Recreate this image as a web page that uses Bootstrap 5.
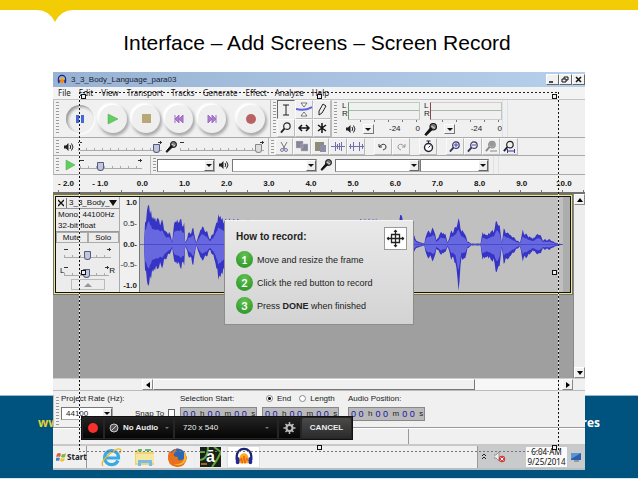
<!DOCTYPE html>
<html lang="en">
<head>
<meta charset="utf-8">
<meta name="viewport" content="width=device-width, initial-scale=1">
<title>Interface – Add Screens – Screen Record</title>
<link rel="stylesheet" href="https://cdn.jsdelivr.net/npm/bootstrap@5.3.0/dist/css/bootstrap.min.css">
<style>
body{font-family:"Liberation Sans",Arial,sans-serif;font-size:8px;line-height:10px;color:#222;background:#fff}
button,input,select{font:inherit;color:inherit;margin:0;padding:0;border:0;background:none;border-radius:0}
svg{display:block;flex:none}
h1{font-size:21px;line-height:26px;color:#000}
.slide-top{height:10px;background:#f2cc05}
.notch{margin-left:37px;width:36px;height:12px}
.slide-head{height:72px}
.layer{grid-area:1/1}
.band{height:84px;background:#00527f;border-top:1px solid #8fbdd2;border-bottom:1px solid #d9e8ee;font:bold 12px/16px "Open Sans",sans-serif;padding:19px 38px 0}
.site{color:#e2d335}
.app-win{margin:0 53px 9px;background:#f0f0f0}
.title-row{height:15px;background:linear-gradient(90deg,#98b2d3,#b6cfec);color:#182234}
.win-btn{width:13px;height:11px;background:#f1f1f1;border:1px solid #fff;border-right-color:#666;border-bottom-color:#666}
.menu-row{height:13px;padding-left:5px;gap:8px;background:#f3f3f4;border-bottom:1px solid #c4c4c4;font-family:"Noto Sans",sans-serif}
.menu-row button{color:#222}
.tool-row{border-bottom:1px solid #aaa}
.row-a{height:38px}.row-b{height:18px}.row-c{height:19px}
.grip{width:7px;align-self:stretch;flex:none;border-left:1px solid #bbb;background:repeating-linear-gradient(#999 0 1px,#f4f4f4 1px 3px) 2px 2px/3px calc(100% - 4px) no-repeat}
.deck{gap:5px;padding:0 5px 0 6px}
.deck .rec{margin-left:6px}
.round-btn{width:28px;height:28px;border-radius:50%;background:#efefef;box-shadow:-2px -2px 2px #fff,1px 2px 3px 1px #aaa;display:grid;place-items:center}
.round-btn.pressed{box-shadow:inset 2px 2px 3px #999,1px 1px 2px #fff}
.tools{display:grid;grid-template-columns:repeat(3,18px);grid-template-rows:19px 18px}
.cell{display:grid;place-items:center;border:1px solid #fafafa;border-right-color:#bbb;border-bottom-color:#bbb}
.cell.pressed{border-color:#666 #eee #eee #666}
.edit-set .cell{width:18px}
.edit-set .gap-after{margin-right:9px}
.meter{width:78px}
.bars{height:18px;margin-top:2px}
.bar-box{border:1px solid #b9cdb9;border-left:1px solid #6ba06b;border-bottom-color:#ccc}
.mic-meter .bar-box{border-color:#d8c8c8 #b9c9b9 #ccc #8c4646}
.bar-box div{height:8px;border-bottom:1px solid #a9b9a9}
.bar-scale{height:18px;background:repeating-linear-gradient(90deg,#777 0 1px,transparent 1px 14px) 18px 0/60px 2px no-repeat}
.range{appearance:none;height:14px;background:linear-gradient(#aaa,#aaa) 0 10px/100% 1px no-repeat,repeating-linear-gradient(90deg,#aaa 0 1px,transparent 1px 8px) 0 8px/100% 2px no-repeat,linear-gradient(#333,#333) 0 2px/4px 1px no-repeat,linear-gradient(#333,#333) 100% 2px/4px 1px no-repeat,linear-gradient(#333,#333) calc(100% - 1px) 1px/1px 3px no-repeat}
.range::-webkit-slider-thumb{appearance:none;width:7px;height:9px;margin-top:3px;background:#c3c6dc;border:1px solid #555b7c;border-radius:1px 1px 4px 4px}
.range.off::-webkit-slider-thumb{background:#ddd;border-color:#888}
.w-vol{width:84px}.w-speed{width:62px}.w-pan{width:20px}
.w-host{width:58px}.w-dev{width:85px}.w-chan{width:69px}.w-rate{width:52px}
.combo{height:13px;background:#fff;border:1px solid #777;border-right-color:#aaa;border-bottom-color:#aaa}
.combo select{appearance:none;min-width:0;flex:1;height:11px;line-height:11px;padding-left:4px}
.arrow{width:10px;align-self:stretch;background:#eee;border:1px solid #fff;border-right-color:#666;border-bottom-color:#666;display:grid;place-items:center;flex:none}
.arrow::after,.drop::after{content:"";border:3px solid transparent;border-top:3px solid #111;border-bottom:0}
.drop{width:11px;height:10px;display:grid;place-items:center;border:1px solid #fff;border-right-color:#777;border-bottom-color:#777}
.icon-pad{margin:0 3px}
.ruler{height:19px;font-weight:bold;color:#111;border-bottom:2px solid #70716d;background:repeating-linear-gradient(90deg,#777 0 1px,transparent 1px 21px) 5px 15px/100% 2px no-repeat}
.ruler span{flex:42 1 0;text-align:center;padding-top:4px}
.ruler span:first-child{flex-grow:26}
.work{height:184px;background:#9f9f9f}
.track{height:101px;border:2px solid #eee39b;outline:1px solid #77775f;outline-offset:-1px}
.track-in{border:1px solid #111}
.panel-box{width:63px;background:#ececec;color:#111;flex:none;line-height:11px}
.panel-box .hr{border-bottom:1px solid #999}
.panel-box .line{padding-left:2px}
.close-x{padding:0 2px;border-right:1px solid #777}
.mute{border:1px solid #aaa;height:11px;line-height:9px;width:50%}
.fold{width:34px;height:11px;border:1px solid #bbb;display:grid;place-items:center}
.vscale{width:21px;background:#f0f0f0;border-left:1px solid #aaa;border-right:1px solid #777;font-weight:bold;padding:1px 2px 1px 0;text-align:right;flex:none}
.vbar{width:12px;background:#ececec;border-left:1px solid #888}
.vbar button,.hbar button{width:11px;height:11px;background:#f2f2f2;border:1px solid #fff;border-right-color:#888;border-bottom-color:#888;display:grid;place-items:center}
.hbar{height:12px;border-top:1px solid #ccc;padding:0 12px 0 89px}
.thumb{flex:287;background:#f0f0f0;border:1px solid #fff;border-right-color:#777;border-bottom-color:#777}
.trough{flex:78;background:#f7f7f7}
.sel-row{height:38px;border-top:1px solid #bbb;padding:4px 0 0;border-bottom:1px solid #999}
.c-rate{width:75px;padding-left:1px}.c-snap{width:45px;padding-top:14px}.c-start{width:82px}.c-end{width:86px}
.time{width:77px;height:14px;background:#b9b9b9;border:1px solid #888;color:#222;font-size:8px;padding-left:2px;gap:3px}
.time input{width:14px;color:#1515a8;font-size:9px;height:12px}
.radio{appearance:none;width:7px;height:7px;border-radius:50%;border:1px solid #888;background:#fff}
.radio:checked{background:radial-gradient(#111 0 1px,#fff 2px)}
.tick{appearance:none;width:7px;height:8px;border:1px solid #666;background:#fff}
.status{height:16px;border-top:1px solid #fff}
.status div:first-child{flex:356;border-right:1px solid #999}.status div:last-child{flex:176}
.taskbar{height:26px;border-top:2px solid #c8c8c8;border-bottom:2px solid #b9bec2}
.start{width:34px;font:bold 8px/10px "Noto Sans",sans-serif;border-right:1px solid #999;gap:1px;padding-left:3px}
.task{height:22px;display:grid;place-items:center;width:33px}
.tray{background:#c8cacc;border-left:1px solid #999;font:8px/10px "Noto Sans",sans-serif}
.clock{background:#fafafa;color:#111;width:41px;text-align:center}
.stage-frame{position:absolute;left:79px;right:79px;top:20px;height:360px;pointer-events:none;background:repeating-linear-gradient(90deg,#222 0 2px,transparent 2px 4px) 0 0/100% 1px no-repeat,repeating-linear-gradient(90deg,#777 0 2px,transparent 2px 4px) 0 100%/100% 1px no-repeat,repeating-linear-gradient(#111 0 2px,#eee 2px 4px) 0 0/1px 100% no-repeat,repeating-linear-gradient(#111 0 2px,#eee 2px 4px) 100% 0/1px 100% no-repeat}
.handles{height:100%;padding:2px;display:grid;grid-template-columns:5px 5px 5px;align-content:space-between;justify-content:space-between}
.handles i{width:5px;height:5px;border:1px solid #111;background:#eee}
.howto{position:absolute;left:50%;margin-left:-95px;top:148px;width:190px;height:105px;background:linear-gradient(#e9e9e9,#d3d3d3);border:1px solid #8c8c8c;border-top-color:#f5f5f5;padding:6px 6px 0 11px;font-size:9px;color:#222}
.howto h2{font-size:10px;line-height:14px;font-weight:bold;padding-top:3px}
.howto .steps{margin-top:-2px}
.howto li{height:23px;gap:4px}
.num{width:17px;height:17px;border-radius:50%;background:radial-gradient(circle at 50% 25%,#5fc04f,#279023);color:#fff;font:bold 11px/17px Lato,sans-serif;text-align:center}
.move-box{width:23px;height:23px;background:#fff;border:1px solid #999;display:grid;place-items:center}
.recorder{position:absolute;left:81px;top:344px;width:272px;height:24px;background:#252525;border:1px solid #111;padding:1px;gap:2px;color:#eee;font-size:8px}
.recorder>*{height:20px;background:linear-gradient(#222,#050505)}
.recorder select{appearance:none;flex:1;min-width:0;height:18px}
.r-audio{width:68px}.r-size{width:102px}
.tri{border:2px solid transparent;border-top-color:#777;border-bottom:0}
.time .tri{border-width:3px 3px 0;border-top-color:#111}
.recorder .cancel{background:linear-gradient(#4a4a4a,#2b2b2b);flex:1;font-weight:bold;border-radius:2px;color:#eee}
</style>
<script src="https://cdn.jsdelivr.net/npm/bootstrap@5.3.0/dist/js/bootstrap.bundle.min.js"></script>
</head>
<body>
<svg width="0" height="0" class="position-absolute" aria-hidden="true">
<symbol id="spk" viewBox="0 0 10 10"><path d="M0 3.500h2L4.500 1v8L2 6.500H0z" fill="#222"/><path d="M6 3q1.500 2 0 4M7.500 1.500q3 3.500 0 7" fill="none" stroke="#222"/></symbol>
<symbol id="mic" viewBox="0 0 12 12"><circle cx="8.500" cy="3.500" r="3" fill="#777" stroke="#111"/><path d="M6 4.500 1 10.500l1 .8L7.500 6z" fill="#111" stroke="#111"/><path d="m7 3 3 2" stroke="#ddd"/></symbol>
<symbol id="lens" viewBox="0 0 13 13"><circle cx="7.500" cy="4.500" r="3.500" fill="none" stroke="currentColor" stroke-width="1.300"/><path d="M5 7 1 11.500" stroke="currentColor" stroke-width="2"/></symbol>
<symbol id="phones" viewBox="0 0 22 22"><path d="M3 14V10a8 8 0 0 1 16 0v4" fill="none" stroke="#1b2376" stroke-width="2.500"/><path d="M6 12q1-5 5-5t5 5v6H6z" fill="#ffab20"/><path d="M5 15h2l1-3 1 6 2-8 1 8 2-6 1 3h2" fill="none" stroke="#e85b12"/><rect x="2" y="11" width="4" height="8" rx="2" fill="#202b92"/><rect x="16" y="11" width="4" height="8" rx="2" fill="#202b92"/></symbol>
</svg>

<div class="d-flex flex-column min-vh-100">
<header class="slide-head">
  <div class="slide-top"></div>
  <svg class="notch" viewBox="0 0 36 12"><path d="M0 0q12 0 18 12Q24 0 36 0z" fill="#f2cc05"/></svg>
  <h1 class="text-center mb-0 mt-1 pt-1 pe-1">Interface – Add Screens – Screen Record</h1>
</header>
<main class="d-grid position-relative flex-grow-1">
<footer class="band layer align-self-end d-flex justify-content-between"><span class="site">www</span><span class="text-white">res</span></footer>
<section class="app-win layer position-relative align-self-start">
  <div class="title-row d-flex align-items-center">
    <svg class="ms-1 me-1" width="10" height="11"><use href="#phones"/></svg><span class="flex-grow-1">3_3_Body_Language_para03</span>
    <button class="win-btn" aria-label="Minimize"><svg width="10" height="9"><path d="M2 7h4" stroke="#111" stroke-width="1.500"/></svg></button>
    <button class="win-btn" aria-label="Restore"><svg width="10" height="9"><path d="M4 4V2h4v3H6M2 4h4v3H2z" fill="none" stroke="#111"/></svg></button>
    <button class="win-btn" aria-label="Close"><svg width="10" height="9"><path d="m3 2 5 5M8 2 3 7" stroke="#111" stroke-width="1.500"/></svg></button>
  </div>
  <nav class="menu-row d-flex align-items-center"><button>File</button><button>Edit</button><button>View</button><button>Transport</button><button>Tracks</button><button>Generate</button><button>Effect</button><button>Analyze</button><button>Help</button></nav>

  <div class="tool-row row-a d-flex">
    <span class="grip"></span>
    <div class="deck d-flex align-items-center">
      <button class="round-btn pressed" aria-label="Pause"><svg width="10" height="10"><path d="M1 1h3v8H1zM6 1h3v8H6z" fill="#4467d8"/></svg></button>
      <button class="round-btn" aria-label="Play"><svg width="12" height="12"><path d="m1 1 10 5L1 11z" fill="#61ce61" stroke="#4aa44a" stroke-width=".5"/></svg></button>
      <button class="round-btn" aria-label="Stop"><svg width="9" height="9"><path d="M0 0h9v9H0z" fill="#b9a877"/></svg></button>
      <button class="round-btn" aria-label="Skip to start"><svg width="10" height="10"><path d="M1 1v8M5 1v8L1 5zM9 1v8L5 5z" fill="#a87cd0" stroke="#a06cc4"/></svg></button>
      <button class="round-btn" aria-label="Skip to end"><svg width="10" height="10"><path d="M9 1v8M1 1v8l4-4zM5 1v8l4-4z" fill="#a87cd0" stroke="#a06cc4"/></svg></button>
      <button class="round-btn rec" aria-label="Record"><svg width="10" height="10"><circle cx="5" cy="5" r="5" fill="#b96262"/></svg></button>
    </div>
    <span class="grip"></span>
    <div class="tools">
      <button class="cell pressed" aria-label="Selection"><svg width="8" height="12"><path d="M1 1h6M4 1v10M1 11h6" stroke="#222"/></svg></button>
      <button class="cell" aria-label="Envelope"><svg width="16" height="15"><path d="M5 1h6L8 5zM5 14h6L8 10z" fill="#fff" stroke="#555" stroke-width=".8"/><path d="M0 7q9 2 16-2" fill="none" stroke="#5b63dd" stroke-width="2"/></svg></button>
      <button class="cell" aria-label="Draw"><svg width="10" height="13"><path d="m2 8 4-7 3 2-4 7-3 2z" fill="#eee" stroke="#222"/></svg></button>
      <button class="cell" aria-label="Zoom"><svg class="text-dark" width="12" height="12"><use href="#lens"/></svg></button>
      <button class="cell" aria-label="Time shift"><svg width="12" height="8"><path d="M1 4h10M4 1 1 4l3 3M8 1l3 3-3 3" fill="none" stroke="#111" stroke-width="1.500"/></svg></button>
      <button class="cell" aria-label="Multi tool"><svg width="10" height="10"><path d="M5 0v10M1 2l8 6M9 2 1 8" stroke="#111" stroke-width="1.500"/></svg></button>
    </div>
    <span class="grip"></span>
    <div class="meter ms-1"><div class="bars d-flex"><div class="lh-1">L<br>R</div><div class="bar-box flex-grow-1"><div></div></div></div>
      <div class="bar-scale d-flex align-items-center justify-content-between ps-1"><svg width="10" height="10"><use href="#spk"/></svg><button class="drop" aria-label="Output options"></button><span class="ps-2">-24</span><span class="ps-2">0</span></div></div>
    <div class="meter mic-meter ms-1"><div class="bars d-flex"><div class="lh-1">L<br>R</div><div class="bar-box flex-grow-1"><div></div></div></div>
      <div class="bar-scale d-flex align-items-center justify-content-between"><svg width="13" height="13"><use href="#mic"/></svg><button class="drop" aria-label="Input options"></button><span class="ps-2">-24</span><span class="ps-2">0</span></div></div>
    <span class="border-start border-end ps-1"></span>
  </div>

  <div class="tool-row row-b d-flex align-items-center">
    <span class="grip me-1"></span><svg width="10" height="10"><use href="#spk"/></svg>
    <input class="range w-vol ms-1" type="range" value="97" aria-label="Output volume">
    <svg class="icon-pad" width="12" height="12"><use href="#mic"/></svg>
    <input class="range off w-vol" type="range" value="97" aria-label="Input volume">
    <span class="grip ms-1"></span>
    <div class="edit-set d-flex align-self-stretch">
    <button class="cell" aria-label="Cut"><svg width="10" height="12"><path d="m2 1 4 7M8 1 4 8" stroke="#777"/><circle cx="3" cy="9" r="1.500" fill="none" stroke="#7a7aa4"/><circle cx="7" cy="9" r="1.500" fill="none" stroke="#7a7aa4"/></svg></button>
    <button class="cell" aria-label="Copy"><svg width="12" height="11"><path d="M0 0h7v7H0zM5 3h7v7H5z" fill="#85859c" stroke="#bbb" stroke-width=".5"/></svg></button>
    <button class="cell" aria-label="Paste"><svg width="11" height="12"><path d="M0 1h9v9H0z" fill="#8c8c79"/><path d="M5 4h6v7H5z" fill="#8d8da8"/></svg></button>
    <button class="cell" aria-label="Trim"><svg width="14" height="11"><path d="M0 5.500h14M4.500 1v9M6.500 3v5M8.500 2v7M10.500 1v9" stroke="#6e70ac"/></svg></button>
    <button class="cell gap-after" aria-label="Silence"><svg width="15" height="11"><path d="M0 5.500h15M1.500 3v5M4.500 1v9M10.500 1v9M13.500 3v5" stroke="#6e70ac"/></svg></button>
    <button class="cell" aria-label="Undo"><svg width="10" height="9"><path d="M1 2v3h3M1 5q5-5 7-1 1 3-3 4" fill="none" stroke="#333"/></svg></button>
    <button class="cell gap-after" aria-label="Redo"><svg width="10" height="9"><path d="M9 2v3H6M9 5Q4 0 2 4 1 7 5 8" fill="none" stroke="#999"/></svg></button>
    <button class="cell gap-after" aria-label="Sync lock"><svg width="11" height="13"><circle cx="5.500" cy="7.500" r="4" fill="#fff" stroke="#223" stroke-width="1.400"/><path d="M5.500 1v3M3.500 1h4M5.500 7.500l2-2" stroke="#223"/></svg></button>
    <button class="cell" aria-label="Zoom in"><svg width="12" height="12" color="#34345f"><use href="#lens"/><path d="M5 4h4M7 2v4" stroke="#44c"/></svg></button>
    <button class="cell" aria-label="Zoom out"><svg width="12" height="12" color="#34345f"><use href="#lens"/><path d="M5 4h4" stroke="#44c"/></svg></button>
    <button class="cell" aria-label="Fit selection"><svg width="12" height="13" color="#888"><use href="#lens"/><circle cx="7" cy="4" r="3" fill="#999"/><path d="M5 11h7" stroke="#888"/></svg></button>
    <button class="cell" aria-label="Fit project"><svg width="12" height="13" color="#222"><use href="#lens"/><path d="M4 11h8M4.500 9v4M11.500 9v4" stroke="#33a"/></svg></button>
    </div>
  </div>

  <div class="tool-row row-c d-flex align-items-center">
    <span class="grip me-1"></span><button aria-label="Play at speed"><svg width="12" height="12"><path d="m2 1 9 5-9 5z" fill="#61ce61" stroke="#4aa44a" stroke-width=".5"/></svg></button>
    <input class="range w-speed ms-1 me-1" type="range" value="31" aria-label="Playback speed">
    <span class="grip ms-1"></span>
    <span class="combo w-host d-flex"><select aria-label="Audio host"><option></option></select><span class="arrow"></span></span>
    <svg class="icon-pad ms-1" width="10" height="10"><use href="#spk"/></svg>
    <span class="combo w-dev d-flex"><select aria-label="Output device"><option></option></select><span class="arrow"></span></span>
    <svg class="icon-pad" width="12" height="12"><use href="#mic"/></svg>
    <span class="combo w-dev d-flex"><select aria-label="Input device"><option></option></select><span class="arrow"></span></span>
    <span class="combo w-chan d-flex"><select aria-label="Input channels"><option></option></select><span class="arrow"></span></span>
    <span class="border-start border-end ps-1 ms-1 align-self-stretch"></span>
  </div>

  <div class="ruler d-flex"><span>- 2.0</span><span>- 1.0</span><span>0.0</span><span>1.0</span><span>2.0</span><span>3.0</span><span>4.0</span><span>5.0</span><span>6.0</span><span>7.0</span><span>8.0</span><span>9.0</span><span>10.0</span></div>

  <div class="work d-flex">
    <div class="flex-grow-1">
      <div class="track d-flex"><div class="track-in d-flex flex-grow-1">
        <div class="panel-box">
          <div class="hr d-flex align-items-center"><button class="close-x" aria-label="Close track"><svg width="6" height="10"><path d="m0 2 6 6M6 2 0 8" stroke="#111" stroke-width="1.300"/></svg></button><span class="line flex-grow-1">3_3_Body_</span><svg class="me-1" width="8" height="6"><path d="M0 0h8L4 6z" fill="#111"/></svg></div>
          <div class="line">Mono, 44100Hz</div><div class="hr line">32-bit float</div>
          <div class="d-flex"><button class="mute">Mute</button><button class="mute">Solo</button></div>
          <div class="px-2 pt-1 d-flex"><input class="range w-100" type="range" value="50" aria-label="Gain"></div>
          <div class="px-1 pt-1 d-flex">L<input class="range w-pan flex-grow-1" type="range" value="50" aria-label="Pan">R</div>
          <button class="fold mx-auto" aria-label="Collapse"><svg width="16" height="8"><path d="M4 6h8L8 2z" fill="#999"/></svg></button>
        </div>
        <div class="vscale d-flex flex-column justify-content-between"><span>1.0</span><span class="fw-normal">0.5-</span><span>0.0-</span><span class="fw-normal">-0.5-</span><span>-1.0</span></div>
        <svg class="flex-grow-1" id="wave" width="10" height="95" viewBox="142 198 428 95" preserveAspectRatio="none"><path d="M142 198h421v95H142z" fill="#c0c0c0"/><path d="M563 198h7v95h-7z" fill="#adadad"/><path id="peak" fill="#3634c4"/><path id="rms" fill="#6768df"/><path d="M142 245.500h421" stroke="#3838b8" stroke-width=".6"/></svg>
      </div></div>
    </div>
    <div class="vbar d-flex flex-column justify-content-between"><button aria-label="Scroll up"><svg width="6" height="4"><path d="M0 4h6L3 0z"/></svg></button><button aria-label="Scroll down"><svg width="6" height="4"><path d="M0 0h6L3 4z"/></svg></button></div>
  </div>
  <div class="hbar d-flex"><button aria-label="Scroll left"><svg width="4" height="6"><path d="M4 0v6L0 3z"/></svg></button><div class="thumb"></div><div class="trough"></div><button aria-label="Scroll right"><svg width="4" height="6"><path d="M0 0v6l4-3z"/></svg></button></div>

  <div class="sel-row d-flex">
    <span class="grip"></span>
    <div class="c-rate"><label for="rate" class="text-nowrap mb-1 d-block lh-1">Project Rate (Hz):</label><span class="combo w-rate d-flex"><select id="rate"><option>44100</option></select><span class="arrow"></span></span></div>
    <div class="c-snap d-flex align-items-start gap-1"><label for="snap" class="text-nowrap">Snap To</label><input id="snap" class="tick" type="checkbox"></div>
    <div class="c-start"><label for="s1" class="mb-1 d-block lh-1">Selection Start:</label><div class="time d-flex align-items-center"><input id="s1" value="0 0"><span>h</span><input value="0 0" aria-label="Start minutes"><span>m</span><input value="0 0" aria-label="Start seconds"><span>s</span></div></div>
    <div class="c-end"><div class="mb-1 d-flex gap-1 lh-1 ps-1"><input class="radio" type="radio" name="m" id="end" checked><label for="end" class="pe-1">End</label><input class="radio" type="radio" name="m" id="len"><label for="len">Length</label></div><div class="time d-flex align-items-center"><input value="0 0" aria-label="End hours"><span>h</span><input value="0 0" aria-label="End minutes"><span>m</span><input value="0 0" aria-label="End seconds"><span>s</span></div></div>
    <div><label for="a1" class="mb-1 d-block lh-1">Audio Position:</label><div class="time d-flex align-items-center"><input id="a1" value="0 0"><span>h</span><input value="0 0" aria-label="Position minutes"><span>m</span><input value="0 0" aria-label="Position seconds"><span>s</span></div></div>
  </div>
  <div class="status d-flex"><div></div><div></div></div>

  <div class="taskbar d-flex align-items-stretch">
    <button class="start d-flex align-items-center"><svg width="10" height="10"><path d="M1 2q2-2 4 0L4 5Q2 4 0 5z" fill="#e65c2c"/><path d="M6 2q2 1 4-1L9 5Q7 6 5 5z" fill="#75b943"/><path d="M0 6q2-1 4 0L3 9Q2 8 0 9z" fill="#3585d0"/><path d="M5 6q2 1 4 0L8 9Q6 10 4 9z" fill="#f2c22e"/></svg>Start</button>
    <div class="d-flex flex-grow-1 ps-2">
      <button class="task" aria-label="Internet Explorer"><svg width="21" height="21" viewBox="0 0 21 21"><path d="M17 13.500A7 7 0 1 1 17.500 9.500v1.500H4.500" fill="none" stroke="#39a9e4" stroke-width="3.200"/><path d="M2 19Q-1 15 8 7.500 17 0 19.500 2.500q1 1-1 4" fill="none" stroke="#eab830" stroke-width="1.400"/></svg></button>
      <button class="task" aria-label="Explorer"><svg width="22" height="20"><path d="M1 3h6l1 2h12v13H1z" fill="#efd370"/><path d="M2 7h18v9H2z" fill="#f6e6a0"/><path d="M4 3h4M11 3h6" stroke="#67b76b" stroke-width="2"/><path d="M4 19v-6h14v6h-3v-3H7v3z" fill="#77bce4"/></svg></button>
      <button class="task" aria-label="Firefox"><svg width="21" height="21"><circle cx="10.500" cy="10.500" r="9" fill="#2d67b1"/><path d="M12 1q-4 1-3 4-3 1-2 4 2 1 4 1-1 4 3 3 4 0 5-4l1 1q-1 10-10 10Q0 19 1 9l1-5 3 2q3-5 7-5z" fill="#e9701e"/><path d="M17 4q5 7 0 12-5 4-10 1 9 1 10-6z" fill="#f6b52d"/></svg></button>
      <button class="task border border-secondary-subtle" aria-label="Amara"><svg width="21" height="20"><path d="M0 0h21v20H0z" fill="#152215"/><path d="M0 13q8-1 8-13M12 20q6-8 9-15M0 5h5M14 0l7 5" stroke="#64a438" stroke-width="2" fill="none"/><path d="M1 17h6" stroke="#b85620" stroke-width="2"/><text x="6" y="15" font-size="16" font-weight="bold" fill="#fff">ā</text></svg></button>
      <button class="task bg-white border" aria-label="Audacity"><svg width="22" height="20"><use href="#phones"/></svg></button>
    </div>
    <div class="tray d-flex align-items-center">
      <svg class="ms-1 me-2" width="4" height="8"><path d="m0 3 2-2 2 2M0 6l2-2 2 2" fill="none" stroke="#222"/></svg>
      <svg class="me-3 pe-1" width="16" height="12"><path d="M0 4h2l3-3v9L2 7H0z" fill="#eee" stroke="#777" stroke-width=".7"/><circle cx="8" cy="8" r="3.200" fill="#d43b36"/><path d="m6.500 6.500 3 3m0-3-3 3" stroke="#fff"/></svg>
      <div class="clock">6:04 AM<br>9/25/2014</div>
      <svg class="ms-1 me-1" width="10" height="10"><path d="M0 1h10v7H0z" fill="#285fae"/><path d="M0 1h10L0 7z" fill="#5795d4"/><path d="M3 9h5" stroke="#666"/></svg>
    </div>
  </div>
</section>

<div class="stage-frame"><div class="handles"><i></i><i></i><i></i><i></i><b></b><i></i><b></b><i></i><i></i></div></div>

<aside class="howto">
  <div class="d-flex justify-content-between"><h2 class="mb-0">How to record:</h2><div class="move-box"><svg width="19" height="19" viewBox="0 0 19 19"><path d="M5.500 5.500h8v8h-8zM9.500 1v17M1 9.500h17" fill="none" stroke="#222" stroke-width="1.300"/><path d="M7.500 3 9.500.5l2 2.500zM7.500 16l2 2.500 2-2.500zM3 7.500.5 9.500l2.500 2zM16 7.500l2.500 2-2.500 2z" fill="#222"/></svg></div></div>
  <ol class="list-unstyled mb-0 steps"><li class="d-flex align-items-center"><span class="num">1</span><span>Move and resize the frame</span></li><li class="d-flex align-items-center"><span class="num">2</span><span>Click the red button to record</span></li><li class="d-flex align-items-center"><span class="num">3</span><span>Press <b>DONE</b> when finished</span></li></ol>
</aside>

<div class="recorder d-flex">
  <button class="px-1" aria-label="Record"><svg width="12" height="12"><circle cx="6" cy="6" r="5" fill="#f6302b"/></svg></button>
  <div class="r-audio d-flex align-items-center px-1"><svg class="me-1" width="10" height="10"><circle cx="5" cy="5" r="4" fill="#555" stroke="#ccc"/><path d="M2 8 8 2" stroke="#ccc"/></svg><select class="fw-bold" aria-label="Audio source"><option>No Audio</option></select><span class="tri"></span></div>
  <div class="r-size d-flex align-items-center px-2"><select aria-label="Frame size"><option>720 x 540</option></select><span class="tri"></span></div>
  <button class="px-1" aria-label="Settings"><svg width="13" height="12" viewBox="0 0 13 12"><circle cx="6.500" cy="6" r="3" fill="none" stroke="#bbb" stroke-width="2"/><path d="M6.500 0v3M6.500 9v3M.5 6h3M9.500 6h3M2.500 2l2 2M8.500 8l2 2M10.500 2l-2 2M4.500 8l-2 2" stroke="#bbb" stroke-width="1.500"/></svg></button>
  <button class="cancel">CANCEL</button>
</div>
</main>
</div>
<script>
// x, peak above and peak below the centre line of the track
const keys=[[142,0,0],[146,0,0],[147,26,31],[151,42,43],[154,27,27],[160,26,24],[165,23,22],[168,12,14],[171,14,11],[174,3,4],[176,22,17],[180,25,20],[183,24,23],[186,21,20],[187,2,2],[190,11,11],[195,16,20],[198,2,1],[203,18,16],[207,16,14],[212,6,6],[217,18,18],[220,30,35],[224,25,28],[300,20,20],[374,25,20],[380,24,20],[398,10,10],[401,32,25],[405,20,20],[413,12,9],[418,3,3],[425,1,1],[427,12,12],[435,17,17],[437,4,4],[441,12,10],[446,11,8],[448,2,2],[452,14,15],[456,17,18],[458,26,42],[459,25,44],[462,15,15],[466,10,14],[468,3,4],[472,1,1],[481,1,1],[483,13,16],[487,9,12],[490,12,14],[494,15,18],[498,27,32],[500,18,20],[502,3,4],[504,15,18],[508,12,15],[514,7,8],[520,2,2],[523,14,16],[528,9,12],[533,6,6],[539,12,11],[543,5,5],[550,5,5],[555,2,2],[563,0,0]];
function shape(scale,rough){
  const up=[],down=[];let k=0;
  for(let x=142;x<=563;x++){
    while(k<keys.length-2&&keys[k+1][0]<x)k++;
    const a=keys[k],b=keys[k+1],t=(x-a[0])/(b[0]-a[0]);
    const j=1.08-rough*Math.abs(Math.sin(x*2.3)*Math.cos(x*.7));
    up.push(x+" "+(245.5-(a[1]+(b[1]-a[1])*t)*scale*j));
    down.unshift(x+" "+(245.5+(a[2]+(b[2]-a[2])*t)*scale*j));
  }
  return "M"+up.concat(down).join("L")+"Z";
}
document.getElementById("peak").setAttribute("d",shape(1,.35));
document.getElementById("rms").setAttribute("d",shape(.55,.15));
</script>
</body>
</html>
